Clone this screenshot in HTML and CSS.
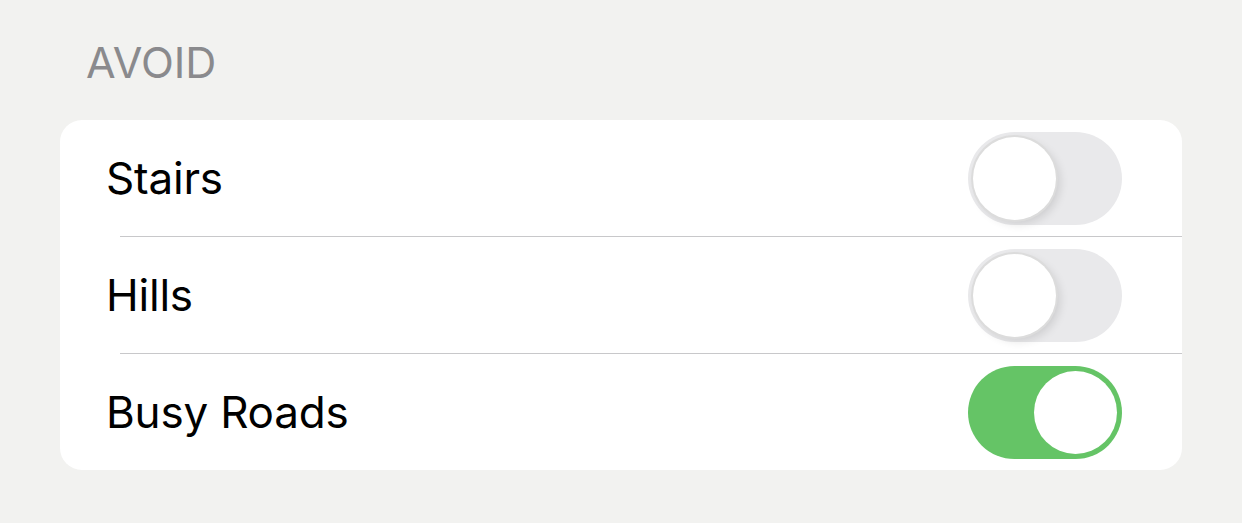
FILE: index.html
```html
<!DOCTYPE html>
<html lang="en">
<head>
    <meta charset="UTF-8">
    <title>Avoid</title>
    <link rel="stylesheet" href="styles.css">
</head>
<body>
    <div class="section">
        <h2 class="section-title">AVOID</h2>
        <div class="group">
            <div class="row">
                <span class="label">Stairs</span>
                <span class="switch"><span class="knob"></span></span>
            </div>
            <div class="row">
                <span class="label">Hills</span>
                <span class="switch"><span class="knob"></span></span>
            </div>
            <div class="row">
                <span class="label">Busy Roads</span>
                <span class="switch on"><span class="knob"></span></span>
            </div>
        </div>
    </div>
</body>
</html>
```

FILE: styles.css
```css
body {
    margin: 0;
    background-color: #f2f2f0;
    font-family: Inter, "Liberation Sans", sans-serif;
}

.section {
    padding: 38px 60px 0 60px;
}

.section-title {
    margin: 0 0 34px 26px;
    font-size: 43px;
    font-weight: 400;
    line-height: 48px;
    color: #8a8a8d;
}

.group {
    background-color: white;
    border-radius: 22px;
    overflow: hidden;
}

.row {
    display: flex;
    align-items: center;
    justify-content: space-between;
    height: 116px;
    padding: 0 60px 0 46px;
}

.row + .row {
    border-top: 1px solid #c8c8ca;
    margin-left: 60px;
    padding-left: 0;
}

.row + .row .label {
    margin-left: -14px;
}

.label {
    font-size: 44px;
    letter-spacing: -0.2px;
    color: #000;
}

.switch {
    width: 154px;
    height: 93px;
    border-radius: 47px;
    background-color: #e9e9eb;
    display: flex;
    align-items: center;
    padding: 0 5px;
    box-sizing: border-box;
}

.knob {
    width: 83px;
    height: 83px;
    border-radius: 50%;
    background-color: white;
    box-shadow: 0 0 0 2px #dcdcdc, 4px 4px 10px rgba(0, 0, 0, 0.12);
}

.switch.on {
    background-color: #65c466;
    justify-content: flex-end;
}

.switch.on .knob {
    box-shadow: none;
}
```
